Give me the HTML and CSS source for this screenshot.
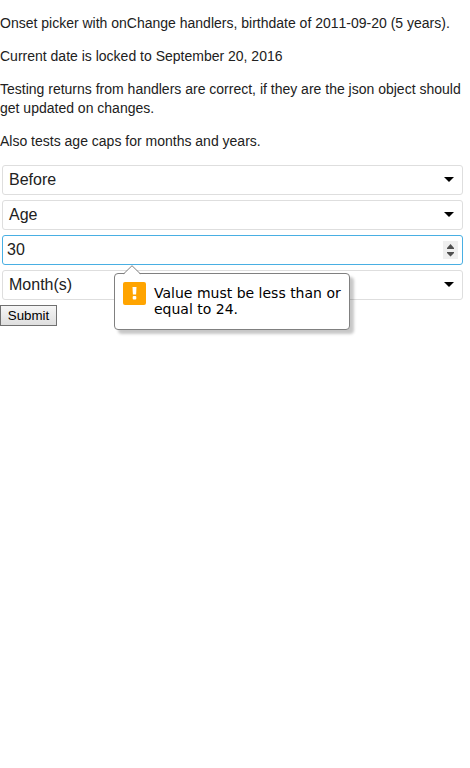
FILE: index.html
```html
<!DOCTYPE html>
<html lang="en">
<head>
<meta charset="utf-8">
<title>Onset picker</title>
<link rel="stylesheet" href="styles.css">
</head>
<body>
<p>Onset picker with onChange handlers, birthdate of <span class="date">2011-09-20</span> (5 years).</p>
<p>Current date is locked to September 20, 2016</p>
<p>Testing returns from handlers are correct, if they are the json object should get updated on changes.</p>
<p>Also tests age caps for months and years.</p>
<form class="picker">
  <div class="field">Before<svg class="caret" width="10" height="5" viewBox="0 0 10 5"><path d="M0 0h10L5 5z"/></svg></div>
  <div class="field">Age<svg class="caret" width="10" height="5" viewBox="0 0 10 5"><path d="M0 0h10L5 5z"/></svg></div>
  <div class="field number">30
    <svg class="spinner" width="15" height="18" viewBox="0 0 15 18"><path fill="#efefef" d="M0 0h15v18H0z"/><path fill="#505050" d="M4 7l3.500-4L11 7v1H4zM4 11h7v1l-3.500 3.500L4 12z"/></svg>
    <div class="tooltip">
      <svg class="pointer" width="18" height="10" viewBox="0 0 18 10"><path fill="#fff" d="M.5 9.500L9 .8l8.500 8.700V10H.5z"/><path fill="none" stroke="#808080" d="M.8 8.700L9 .7l8.200 8"/></svg>
      <svg class="warning" width="23" height="23" viewBox="0 0 23 23"><rect width="23" height="23" rx="2" fill="#ffa400"/><path fill="#fff" d="M9.500 5h4l-.4 7.500H9.900z"/><rect x="9.700" y="14" width="3.600" height="3.400" rx="1" fill="#fff"/></svg>
      <span>Value must be less than or<br>equal to 24.</span>
    </div>
  </div>
  <div class="field">Month(s)<svg class="caret" width="10" height="5" viewBox="0 0 10 5"><path d="M0 0h10L5 5z"/></svg></div>
  <button class="submit" type="button">Submit</button>
</form>
</body>
</html>
```

FILE: styles.css
```css
* { box-sizing: border-box; }
body {
  display: flow-root;
  margin: 0;
  width: 465px;
  min-height: 100vh;
  background: #fff;
  color: #212121;
  font: 14px/19px "Liberation Sans", Arial, sans-serif;
}
p { margin: 14px 0; }
.date { font-kerning: none; }
.picker {
  display: flex;
  flex-direction: column;
  gap: 5px;
}
.field {
  display: flex;
  align-items: center;
  justify-content: space-between;
  position: relative;
  height: 30px;
  margin: 0 2px;
  padding: 0 8px 2px 6px;
  border: 1px solid #dedede;
  border-radius: 3px;
  font-size: 16px;
}
.caret { margin-top: 1px; fill: #000; }
.number {
  padding: 0 4px 2px;
  border-color: #49afe3;
}
.spinner { display: block; margin-top: 2px; }
.tooltip {
  position: absolute;
  z-index: 1;
  top: 37px;
  left: 111px;
  display: flex;
  width: 236px;
  height: 57px;
  padding: 8px;
  gap: 8px;
  border: 1px solid #808080;
  border-radius: 4px;
  background: #fff;
  box-shadow: 4px 4px 3px rgba(0, 0, 0, .22);
  color: #000;
  font: 14px/16px "DejaVu Sans", sans-serif;
  white-space: nowrap;
}
.tooltip span { padding-top: 3px; }
.pointer {
  position: absolute;
  top: -9px;
  left: 8px;
}
.warning { flex: none; }
.submit {
  align-self: flex-start;
  width: 57px;
  height: 21px;
  padding: 0;
  border: 1px solid #707070;
  border-radius: 0;
  background: linear-gradient(#f6f6f6, #dedede);
  color: #000;
  font: 13.333px "Liberation Sans", Arial, sans-serif;
}
```
